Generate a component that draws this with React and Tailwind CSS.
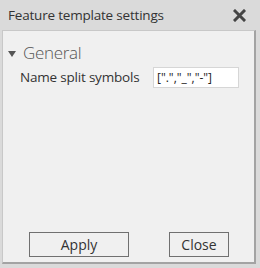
export default function App() {
  const font = { fontFamily: '"Open Sans", "Noto Sans", sans-serif' };
  return (
    <div className="w-[260px] h-[268px] bg-[#dadada] flex flex-col" style={font}>
      <div className="h-[30px] flex items-center justify-between pl-[8px] pr-[14px]">
        <span className="text-[13.5px] text-[#333333] tracking-[-0.2px]">Feature template settings</span>
        <svg width="13" height="13" viewBox="0 0 13 13">
          <path d="M2 2 L11 11 M11 2 L2 11" stroke="#444" strokeWidth="3" strokeLinecap="square" />
        </svg>
      </div>
      <div className="ml-[2px] mr-[4px] mb-[4px] flex-1 bg-[#f0f0f0] border-l border-t border-[#c8c8c8] border-r-2 border-b-2 border-r-[#a3a3a3] border-b-[#a3a3a3] flex flex-col">
        <div className="flex items-center pl-[5px] pt-[9px] h-[34px]">
          <svg width="8" height="6" viewBox="0 0 8 6" className="mr-[7px] mt-[2px]">
            <path d="M0 0 L8 0 L4 6 Z" fill="#555" />
          </svg>
          <span className="text-[17px] text-[#555555] font-light leading-none tracking-[-0.3px]">General</span>
        </div>
        <div className="flex items-center pl-[17px] mt-[2px]">
          <span className="text-[13.5px] text-[#333333] w-[133px] tracking-[-0.2px]">Name split symbols</span>
          <div className="w-[86px] h-[21px] bg-white border border-[#d6d6d6] flex items-center pl-[3px] text-[12px] text-[#222]">
            [".","_","-"]
          </div>
        </div>
        <div className="mt-auto flex pb-[5px]">
          <button className="ml-[26px] w-[100px] h-[25px] border border-[#707070] bg-[#f0f0f0] text-[14px] text-[#333] flex items-center justify-center">Apply</button>
          <button className="ml-[40px] w-[60px] h-[25px] border border-[#707070] bg-[#f0f0f0] text-[14px] text-[#333] flex items-center justify-center">Close</button>
        </div>
      </div>
    </div>
  );
}
